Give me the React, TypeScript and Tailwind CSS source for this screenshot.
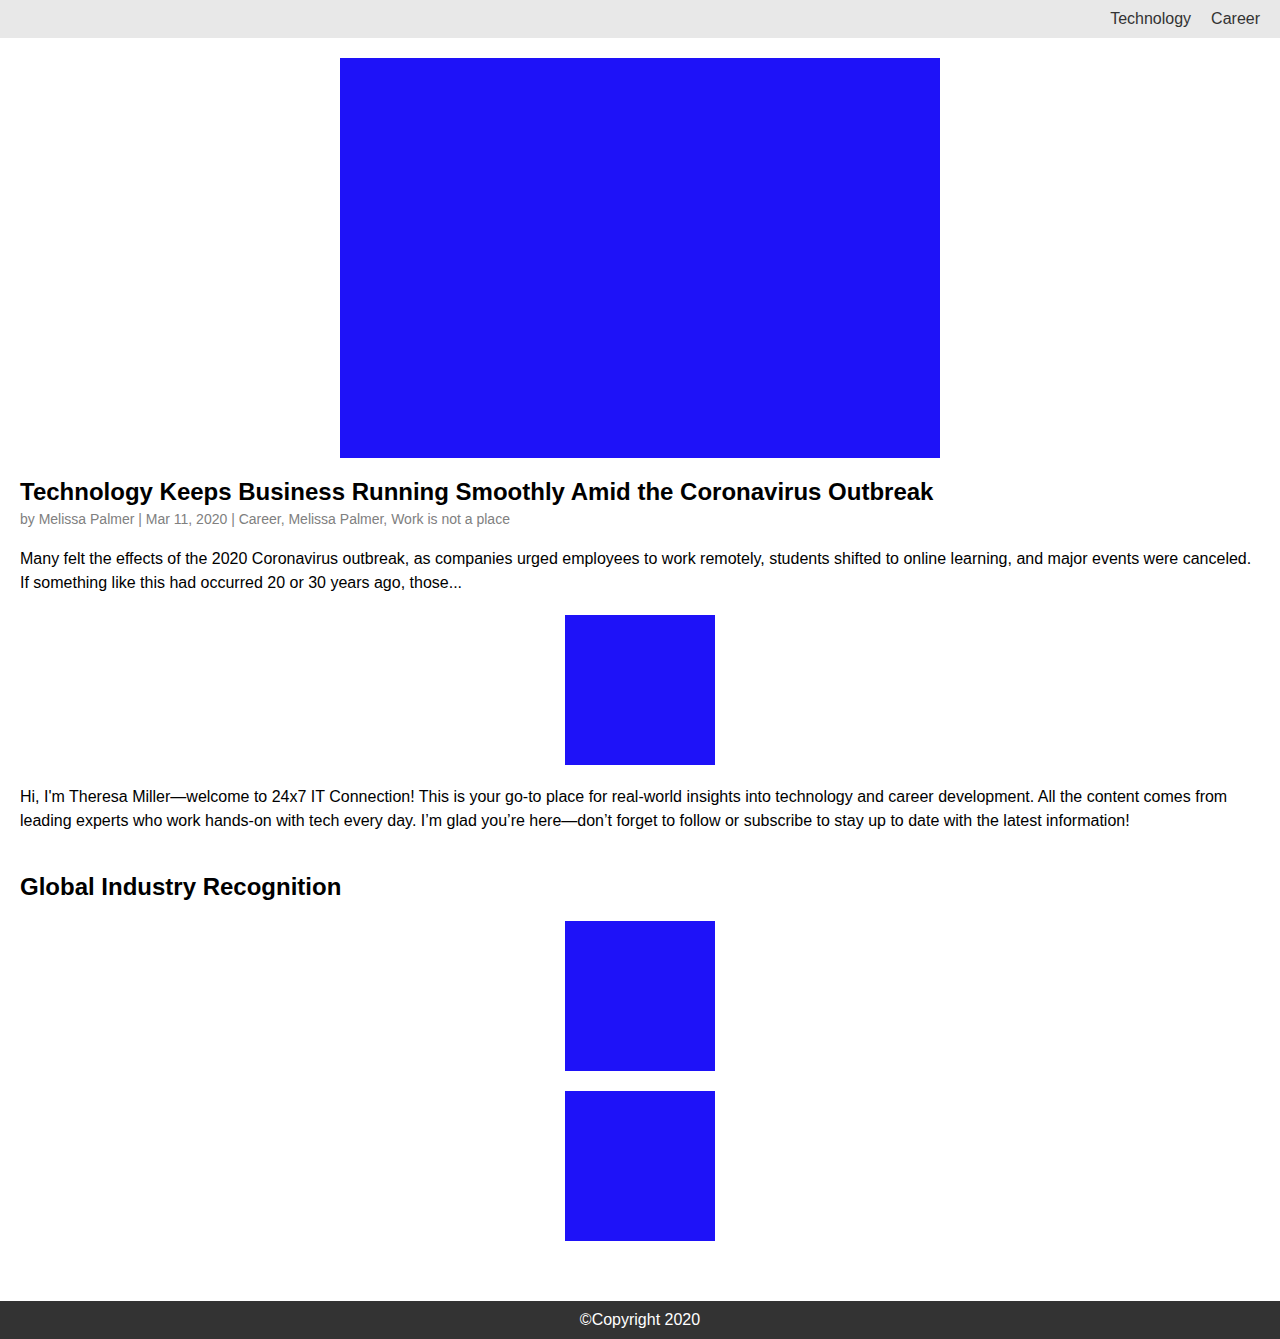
const BLUE = "bg-[#1e12f8]";

function Nav() {
  return (
    <nav className="flex h-[38px] items-center justify-end gap-5 bg-[#e8e8e8] px-5 text-[16px] text-[#333]">
      <a href="#">Technology</a>
      <a href="#">Career</a>
    </nav>
  );
}

export default function App() {
  return (
    <div className="flex min-h-screen flex-col bg-white font-['Liberation_Sans',Arial,sans-serif] text-black">
      <Nav />
      <main className="flex-1 px-5 pt-5 pb-[60px]">
        <div className={`mx-auto h-[400px] w-[600px] ${BLUE}`} />
        <h1 className="mt-5 text-[24px] leading-[28px] font-bold">
          Technology Keeps Business Running Smoothly Amid the Coronavirus Outbreak
        </h1>
        <p className="mt-[3px] text-[14px] leading-[20px] text-[#808080]">
          by Melissa Palmer | Mar 11, 2020 | Career, Melissa Palmer, Work is not a place
        </p>
        <p className="mt-[18px] text-[16px] leading-[24px]">
          Many felt the effects of the 2020 Coronavirus outbreak, as companies urged employees to work remotely, students shifted to online learning, and major events were canceled. If something like this had occurred 20 or 30 years ago, those...
        </p>
        <div className={`mx-auto mt-[20px] h-[150px] w-[150px] ${BLUE}`} />
        <p className="mt-[20px] text-[16px] leading-[24px]">
          Hi, I'm Theresa Miller—welcome to 24x7 IT Connection! This is your go-to place for real-world insights into technology and career development. All the content comes from leading experts who work hands-on with tech every day. I’m glad you’re here—don’t forget to follow or subscribe to stay up to date with the latest information!
        </p>
        <h2 className="mt-[40px] text-[24px] leading-[28px] font-bold">Global Industry Recognition</h2>
        <div className="mt-[20px] flex flex-col items-center gap-5">
          <div className={`h-[150px] w-[150px] ${BLUE}`} />
          <div className={`h-[150px] w-[150px] ${BLUE}`} />
        </div>
      </main>
      <footer className="flex h-[38px] items-center justify-center bg-[#333] text-[16px] text-white">
        ©Copyright 2020
      </footer>
    </div>
  );
}
